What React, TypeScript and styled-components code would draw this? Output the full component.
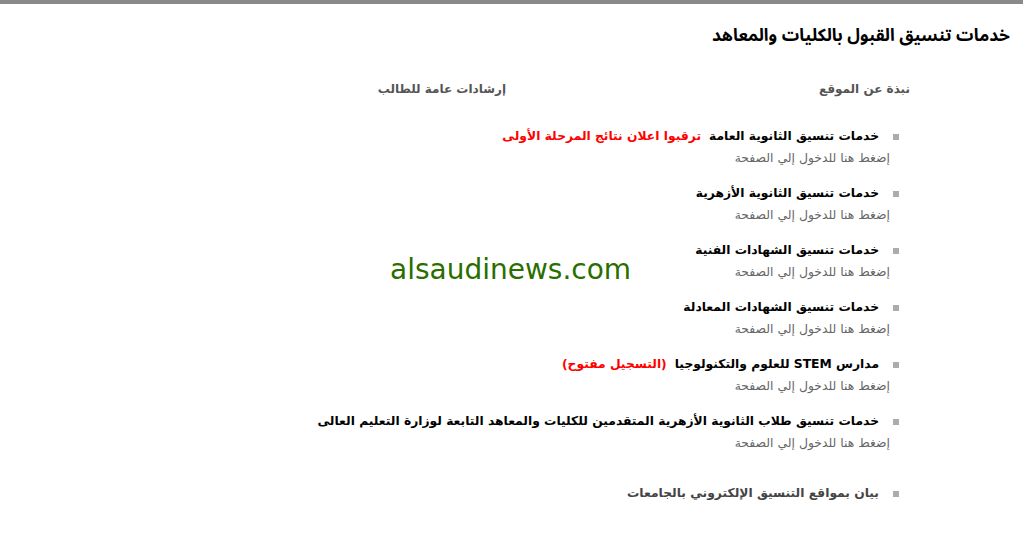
import React from 'react';
import styled, { createGlobalStyle } from 'styled-components';

const GlobalStyle = createGlobalStyle`
  html, body {
    margin: 0;
    padding: 0;
    background: #fff;
  }
  body {
    font-family: "DejaVu Sans", "Noto Sans Arabic", sans-serif;
  }
`;

const Page = styled.div`
  direction: rtl;
  position: relative;
  width: 1023px;
  height: 535px;
  overflow: hidden;
  border-top: 4px solid #8a8a8a;
  box-sizing: border-box;
`;

const Title = styled.h1`
  margin: 0;
  padding: 19px 13px 0 0;
  font-family: "Noto Sans Arabic", "DejaVu Sans", sans-serif;
  font-size: 17.3px;
  font-weight: bold;
  color: #000;
  line-height: 26px;
`;

const Tabs = styled.div`
  display: flex;
  padding: 32px 113px 0 0;
`;

const Tab = styled.span<{ $w: number }>`
  width: ${(p) => p.$w}px;
  font-size: 12px;
  font-weight: bold;
  color: #555;
  line-height: 16px;
`;

const List = styled.ul`
  list-style: none;
  margin: 0;
  padding: 31px 124px 0 0;
`;

const Item = styled.li<{ $gap?: number }>`
  display: flex;
  flex-direction: column;
  gap: 5px;
  margin-top: ${(p) => p.$gap ?? 0}px;
  height: 57px;
`;

const ItemHead = styled.div`
  display: flex;
  align-items: center;
  gap: 14px;
`;

const Bullet = styled.span`
  width: 6px;
  height: 6px;
  background: #acacac;
  flex: none;
`;

const ItemTitle = styled.span<{ $muted?: boolean }>`
  font-size: 12.3px;
  font-weight: bold;
  color: ${(p) => (p.$muted ? '#444' : '#000')};
  line-height: 17px;
`;

const Note = styled.span`
  margin-right: 8px;
  color: #f00;
  font-weight: bold;
`;

const Sub = styled.a`
  font-size: 12.4px;
  color: #666;
  line-height: 16px;
  text-decoration: none;
  margin-right: 9px;
`;

const Watermark = styled.div`
  position: absolute;
  left: 390px;
  top: 249px;
  direction: ltr;
  font-family: "DejaVu Sans", sans-serif;
  font-size: 28px;
  color: #2a6e00;
`;

const items: { title: string; note?: string }[] = [
  { title: 'خدمات تنسيق الثانوية العامة', note: 'ترقبوا اعلان نتائج المرحلة الأولى' },
  { title: 'خدمات تنسيق الثانوية الأزهرية' },
  { title: 'خدمات تنسيق الشهادات الفنية' },
  { title: 'خدمات تنسيق الشهادات المعادلة' },
  { title: 'مدارس STEM للعلوم والتكنولوجيا', note: '(التسجيل مفتوح)' },
  { title: 'خدمات تنسيق طلاب الثانوية الأزهرية المتقدمين للكليات والمعاهد التابعة لوزارة التعليم العالى' },
];

export default function App() {
  return (
    <>
      <GlobalStyle />
      <Page>
        <Title>خدمات تنسيق القبول بالكليات والمعاهد</Title>
        <Tabs>
          <Tab $w={404}>نبذة عن الموقع</Tab>
          <Tab $w={200}>إرشادات عامة للطالب</Tab>
        </Tabs>
        <List>
          {items.map((it) => (
            <Item key={it.title}>
              <ItemHead>
                <Bullet />
                <ItemTitle>
                  {it.title}
                  {it.note && <Note>{it.note}</Note>}
                </ItemTitle>
              </ItemHead>
              <Sub href="#">إضغط هنا للدخول إلي الصفحة</Sub>
            </Item>
          ))}
          <Item $gap={15}>
            <ItemHead>
              <Bullet />
              <ItemTitle $muted>بيان بمواقع التنسيق الإلكتروني بالجامعات</ItemTitle>
            </ItemHead>
          </Item>
        </List>
        <Watermark>alsaudinews.com</Watermark>
      </Page>
    </>
  );
}
